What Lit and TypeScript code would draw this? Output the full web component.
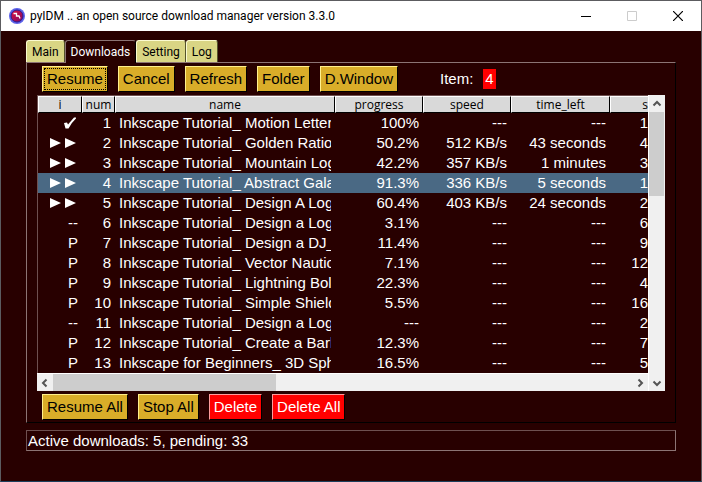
import { LitElement, html, css, svg } from "lit";
import { customElement, state } from "lit/decorators.js";
import { classMap } from "lit/directives/class-map.js";

interface Row {
  mark: "done" | "run" | "--" | "P";
  name: string;
  progress: string;
  speed: string;
  left: string;
  size: string;
}

const row = (mark: Row["mark"], name: string, progress: string, size: string, speed = "---", left = "---"): Row => ({
  mark, name, progress, speed, left, size,
});

const ROWS: Row[] = [
  row("done", "Inkscape Tutorial_ Motion Letter L", "100%", "1"),
  row("run", "Inkscape Tutorial_ Golden Ratio L", "50.2%", "4", "512 KB/s", "43 seconds"),
  row("run", "Inkscape Tutorial_ Mountain Logo", "42.2%", "3", "357 KB/s", "1 minutes"),
  row("run", "Inkscape Tutorial_ Abstract Galax", "91.3%", "1", "336 KB/s", "5 seconds"),
  row("run", "Inkscape Tutorial_ Design A Logo", "60.4%", "2", "403 KB/s", "24 seconds"),
  row("--", "Inkscape Tutorial_ Design a Logo", "3.1%", "6"),
  row("P", "Inkscape Tutorial_ Design a DJ_L", "11.4%", "9"),
  row("P", "Inkscape Tutorial_ Vector Nautica", "7.1%", "12"),
  row("P", "Inkscape Tutorial_ Lightning Bolt", "22.3%", "4"),
  row("P", "Inkscape Tutorial_ Simple Shield", "5.5%", "16"),
  row("--", "Inkscape Tutorial_ Design a Logo", "---", "2"),
  row("P", "Inkscape Tutorial_ Create a Barb", "12.3%", "7"),
  row("P", "Inkscape for Beginners_ 3D Sphe", "16.5%", "5"),
];

const CHEVRONS = {
  up: "M1.5 6.5 L5 3 L8.5 6.5",
  down: "M1.5 3.5 L5 7 L8.5 3.5",
  left: "M6.5 1.5 L3 5 L6.5 8.5",
  right: "M3.5 1.5 L7 5 L3.5 8.5",
};

const chevron = (dir: keyof typeof CHEVRONS) => html`<svg width="10" height="10" viewBox="0 0 10 10" aria-hidden="true">
  ${svg`<path d=${CHEVRONS[dir]} fill="none" stroke="#555" stroke-width="2"/>`}
</svg>`;

const checkIcon = html`<svg width="12" height="12" viewBox="0 0 12 12" role="img" aria-label="completed">
  <path d="M0 6 L3 5.5 L4 7.5 L10 0.5 L12 0.5 L12 1.5 Q8 5 4.5 11.5 L1.5 11.5 Z" fill="#fff"/>
</svg>`;

const runIcon = html`<svg width="26" height="10" viewBox="0 0 26 10" role="img" aria-label="downloading">
  <path d="M0 0 L11 5 L0 10 Z M15 0 L26 5 L15 10 Z" fill="#fff"/>
</svg>`;

@customElement("app-root")
export class AppRoot extends LitElement {
  @state() private tab = "Downloads";
  @state() private selected = 4;

  static styles = css`
    :host {
      display: flex;
      flex-direction: column;
      box-sizing: border-box;
      min-height: 100vh;
      border: 1px solid #5c5c60;
      border-bottom-color: #1c3f5c;
      background: #280000;
      color: #fff;
      font: 15px/20px "Liberation Sans", Arial, sans-serif;
    }
    button {
      font: inherit;
      margin: 0;
      cursor: default;
    }
    svg {
      display: block;
    }
    .titlebar {
      display: flex;
      align-items: center;
      height: 30px;
      background: #fff;
      color: #000;
      padding-left: 8px;
    }
    h1 {
      flex: 1;
      margin: 0 0 0 5px;
      font: 12px/20px Roboto, "Noto Sans", sans-serif;
      white-space: nowrap;
    }
    .win {
      width: 46px;
      height: 30px;
      padding: 0;
      border: 0;
      background: none;
      display: grid;
      place-items: center;
    }
    main {
      padding: 9px 25px 0;
    }
    .tabs {
      display: flex;
      align-items: flex-end;
      font: 12px/20px Roboto, "Noto Sans", sans-serif;
    }
    .tab {
      height: 22px;
      padding: 0 5px;
      border: 1px solid #fbfad0;
      border-right-color: #55532c;
      border-bottom: 0;
      border-radius: 3px 3px 0 0;
      background: #d9d584;
      color: #000;
    }
    .tab.active {
      height: 23px;
      margin-bottom: -1px;
      position: relative;
      border-color: #8c7474;
      border-right-color: #000;
      background: #280000;
      color: #fff;
    }
    .panel {
      border: 1px solid #8c7474;
      border-right-color: #000;
      border-bottom-color: #000;
      padding: 3px 10px 2px;
    }
    .bar {
      display: flex;
      align-items: center;
      gap: 10px;
      padding-left: 5px;
    }
    .btn {
      height: 26px;
      padding: 0 4px;
      border: 1px solid #fff08c;
      border-right-color: #000;
      border-bottom-color: #000;
      background: #d9ad29;
      color: #000;
      white-space: nowrap;
    }
    .btn.focus {
      outline: 1px dotted #000;
      outline-offset: -3px;
    }
    .btn.danger {
      background: #f00;
      color: #fff;
      border-color: #ff9c9c #000 #000 #ff9c9c;
    }
    .item {
      margin-left: 32px;
    }
    .count {
      background: #f00;
      line-height: 20px;
      padding: 0 2px;
    }
    .view {
      display: grid;
      grid-template-columns: minmax(0, 1fr) 17px;
      margin: 3px 0;
    }
    .body {
      overflow: hidden;
      border-top: 1px solid #6e5050;
      border-left: 1px solid #6e5050;
    }
    table {
      width: 100%;
      table-layout: fixed;
      border-collapse: separate;
      border-spacing: 0;
    }
    .c-i { width: 44px; }
    .c-num { width: 33px; }
    .c-name { width: 220px; }
    .c-mid { width: 88px; }
    .c-time { width: 99px; }
    th {
      box-sizing: border-box;
      height: 17px;
      padding: 0;
      border: 1px solid #fff;
      border-right-color: #000;
      border-bottom-color: #000;
      background: #d9d9d9;
      color: #000;
      font: 12px/15px "Open Sans", "Noto Sans", sans-serif;
      overflow: hidden;
      white-space: nowrap;
    }
    th.cut {
      text-align: right;
      border-right: 0;
    }
    td {
      height: 20px;
      padding: 0 4px;
      line-height: 20px;
      text-align: right;
      white-space: nowrap;
    }
    td.name {
      text-align: left;
    }
    .clip {
      overflow: hidden;
    }
    td.cut {
      padding: 0;
    }
    td svg {
      margin-left: auto;
      margin-right: 2px;
    }
    tr.sel td {
      background: #4a6984;
    }
    .vscroll,
    .hscroll {
      display: flex;
      background: #f0f0f0;
    }
    .vscroll {
      grid-row: span 2;
      flex-direction: column;
      border-left: 1px solid #fff;
    }
    .hscroll {
      border-top: 1px solid #fff;
    }
    .arrow {
      flex: none;
      width: 16px;
      height: 17px;
      padding: 0;
      border: 0;
      background: none;
      display: grid;
      place-items: center;
    }
    .track {
      flex: 1;
    }
    .thumb {
      background: #cdcdcd;
    }
    .vscroll .thumb {
      height: 32%;
      width: 15px;
    }
    .hscroll .thumb {
      width: 38.5%;
      height: 17px;
    }
    .status {
      margin-top: 7px;
      border: 1px solid #8c7474;
      border-top-color: #6e5050;
      border-left-color: #6e5050;
      padding-left: 1px;
      line-height: 19px;
    }
  `;

  private renderRow(r: Row, n: number) {
    const mark = r.mark === "done" ? checkIcon : r.mark === "run" ? runIcon : r.mark;
    return html`<tr class=${classMap({ sel: n === this.selected })} @click=${() => (this.selected = n)}>
      <td>${mark}</td>
      <td>${n}</td>
      <td class="name"><div class="clip">${r.name}</div></td>
      <td>${r.progress}</td>
      <td>${r.speed}</td>
      <td>${r.left}</td>
      <td class="cut">${r.size}</td>
    </tr>`;
  }

  render() {
    return html`
      <header class="titlebar">
        <svg width="16" height="16" viewBox="0 0 16 16" aria-hidden="true">
          <defs>
            <linearGradient id="g" x1="0" y1="0" x2="1" y2="1">
              <stop offset="0" stop-color="#e0103c" />
              <stop offset="1" stop-color="#7a0a68" />
            </linearGradient>
          </defs>
          <circle cx="8" cy="8" r="8" fill="#5c62ea" />
          <circle cx="8" cy="8" r="6" fill="url(#g)" stroke="#2a1a90" stroke-width="1" />
          <path d="M4.5 5.5 L7.5 5.5 L7.5 8 L10 8 L11 10.5" fill="none" stroke="#fff" stroke-width="1.3" />
        </svg>
        <h1>pyIDM .. an open source download manager version 3.3.0</h1>
        <button class="win" aria-label="Minimize">
          <svg width="10" height="10" viewBox="0 0 10 10"><path d="M0 5.5H10" stroke="#000" /></svg>
        </button>
        <button class="win" aria-label="Maximize" disabled>
          <svg width="10" height="10" viewBox="0 0 10 10"><path d="M.5 .5H9.5V9.5H.5Z" fill="none" stroke="#ccc" /></svg>
        </button>
        <button class="win" aria-label="Close">
          <svg width="10" height="10" viewBox="0 0 10 10"><path d="M0 0L10 10M10 0L0 10" stroke="#000" stroke-width="1.2" /></svg>
        </button>
      </header>
      <main>
        <div class="tabs" role="tablist">
          ${["Main", "Downloads", "Setting", "Log"].map(
            (t) => html`<button
              role="tab"
              aria-selected=${t === this.tab}
              class=${classMap({ tab: true, active: t === this.tab })}
              @click=${() => (this.tab = t)}
            >${t}</button>`
          )}
        </div>
        <section class="panel" role="tabpanel" aria-label="Downloads">
          <div class="bar">
            <button class="btn focus">Resume</button>
            <button class="btn">Cancel</button>
            <button class="btn">Refresh</button>
            <button class="btn">Folder</button>
            <button class="btn">D.Window</button>
            <span class="item">Item:</span>
            <span class="count">${this.selected}</span>
          </div>
          <div class="view">
            <div class="body">
              <table>
                <colgroup>
                  <col class="c-i" /><col class="c-num" /><col class="c-name" /><col class="c-mid" />
                  <col class="c-mid" /><col class="c-time" /><col />
                </colgroup>
                <thead>
                  <tr>
                    <th>i</th><th>num</th><th>name</th><th>progress</th><th>speed</th><th>time_left</th><th class="cut">s</th>
                  </tr>
                </thead>
                <tbody>
                  ${ROWS.map((r, i) => this.renderRow(r, i + 1))}
                </tbody>
              </table>
            </div>
            <div class="vscroll">
              <button class="arrow" aria-label="Scroll up">${chevron("up")}</button>
              <div class="track"><div class="thumb"></div></div>
              <button class="arrow" aria-label="Scroll down">${chevron("down")}</button>
            </div>
            <div class="hscroll">
              <button class="arrow" aria-label="Scroll left">${chevron("left")}</button>
              <div class="track"><div class="thumb"></div></div>
              <button class="arrow" aria-label="Scroll right">${chevron("right")}</button>
            </div>
          </div>
          <div class="bar">
            <button class="btn">Resume All</button>
            <button class="btn">Stop All</button>
            <button class="btn danger">Delete</button>
            <button class="btn danger">Delete All</button>
          </div>
        </section>
        <div class="status" role="status">Active downloads: 5, pending: 33</div>
      </main>
    `;
  }
}
